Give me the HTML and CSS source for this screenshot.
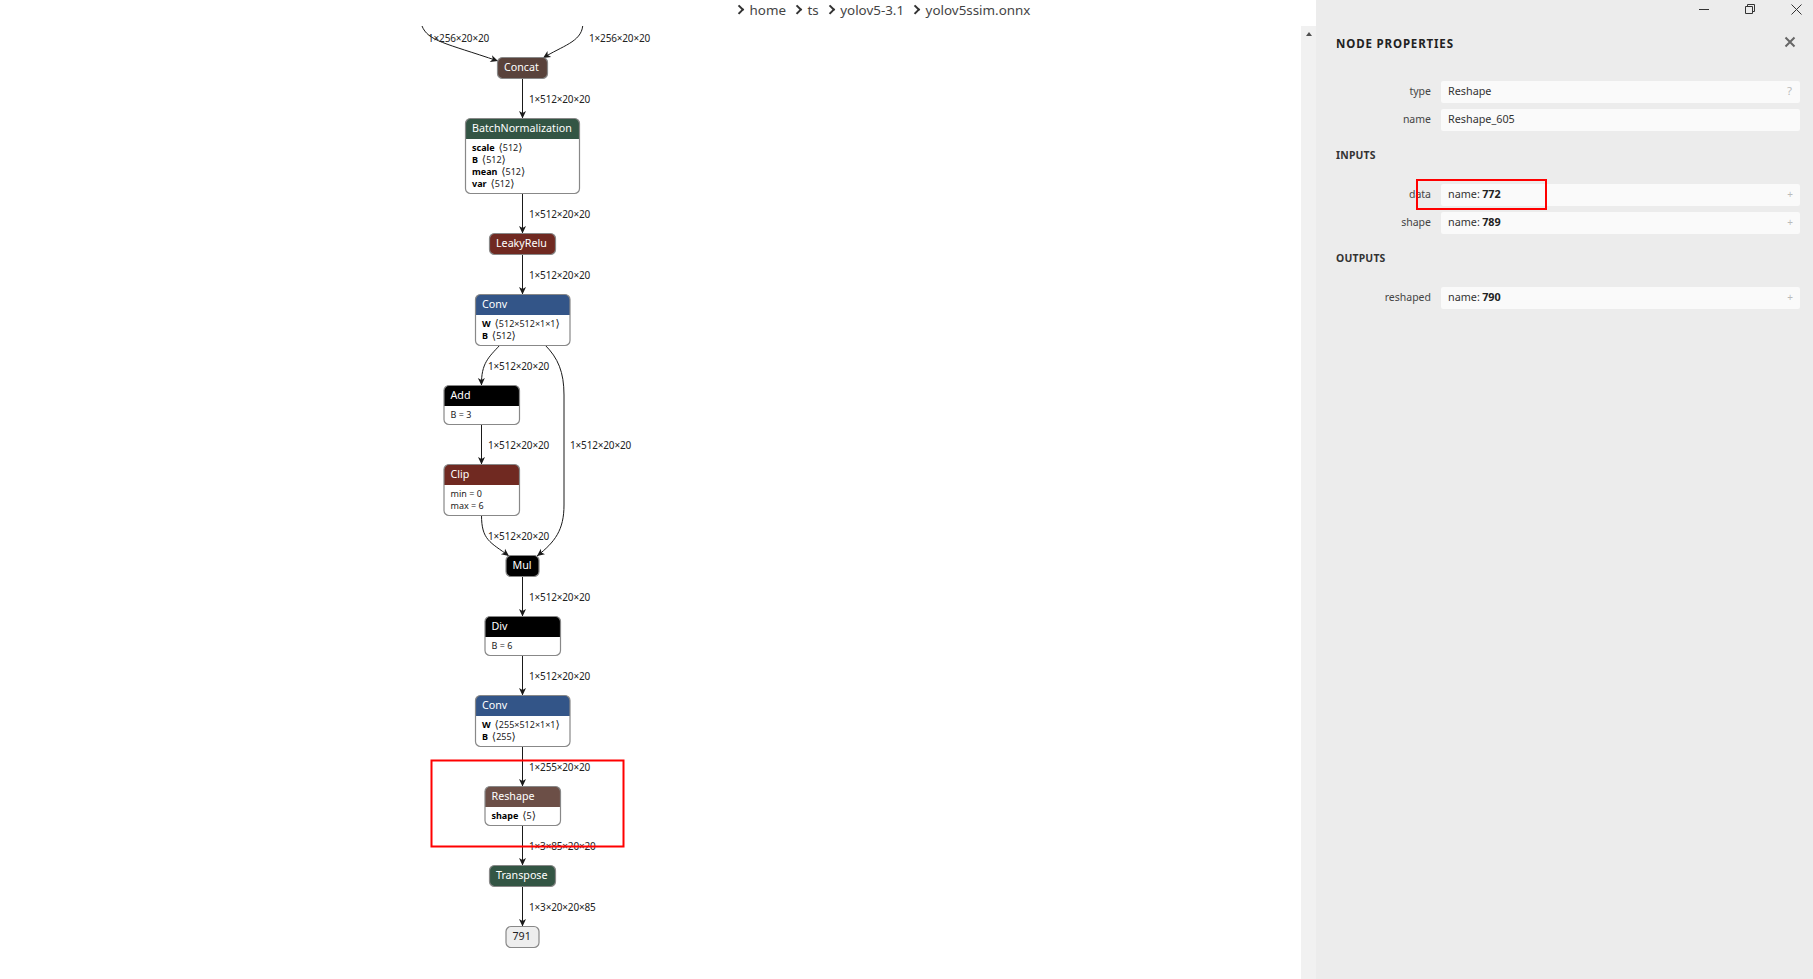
FILE: index.html
```html
<!DOCTYPE html>
<html lang="en">
<head>
<meta charset="utf-8">
<title>yolov5ssim.onnx</title>
<link rel="stylesheet" href="styles.css">
</head>
<body>
<div class="app">
  <main class="canvas">
    <svg class="graph" width="1301" height="979" viewBox="0 0 1301 979">
      <defs>
        <marker id="arrow" markerUnits="userSpaceOnUse" markerWidth="9" markerHeight="8" refX="8" refY="4" orient="auto">
          <path class="arrow-head" d="M0.5 0.5 L8 4 L0.5 7.5 L2.5 4 Z"/>
        </marker>
      </defs>
      <g class="edges">
        <path marker-end="url(#arrow)" d="M422 26 C428 41 445 43 498 61"/>
        <path marker-end="url(#arrow)" d="M582.7 26 C581 42 562 46 543 58"/>
        <path marker-end="url(#arrow)" d="M522.5 78 V118.5"/>
        <path marker-end="url(#arrow)" d="M522.5 193 V233.5"/>
        <path marker-end="url(#arrow)" d="M522.5 254 V294.5"/>
        <path marker-end="url(#arrow)" d="M500 345 C489 357 481 363 481.5 385.5"/>
        <path marker-end="url(#arrow)" d="M545 345 C558 358 564 372 564 395 L564 505 C564 530 555 542 537 556"/>
        <path marker-end="url(#arrow)" d="M481.5 424 V464.5"/>
        <path marker-end="url(#arrow)" d="M481.5 515 C481.5 540 490 542 509 556"/>
        <path marker-end="url(#arrow)" d="M522.5 576 V616.5"/>
        <path marker-end="url(#arrow)" d="M522.5 655 V695.5"/>
        <path marker-end="url(#arrow)" d="M522.5 746 V786.5"/>
        <path marker-end="url(#arrow)" d="M522.5 825 V865.5"/>
        <path marker-end="url(#arrow)" d="M522.5 886 V926.5"/>
      </g>
      <g class="edge-labels">
        <text x="428" y="42">1×256×20×20</text>
        <text x="589" y="42">1×256×20×20</text>
        <text x="529" y="103">1×512×20×20</text>
        <text x="529" y="218">1×512×20×20</text>
        <text x="529" y="279">1×512×20×20</text>
        <text x="488" y="370">1×512×20×20</text>
        <text x="488" y="449">1×512×20×20</text>
        <text x="570" y="449">1×512×20×20</text>
        <text x="488" y="540">1×512×20×20</text>
        <text x="529" y="601">1×512×20×20</text>
        <text x="529" y="680">1×512×20×20</text>
        <text x="529" y="771">1×255×20×20</text>
        <text x="529" y="850">1×3×85×20×20</text>
        <text x="529" y="911">1×3×20×20×85</text>
      </g>

      <g transform="translate(497.5 57.5)">
        <rect class="solid t-tensor" width="50" height="21" rx="5"/>
        <text class="node-title" x="6.5" y="13.5">Concat</text>
      </g>

      <g transform="translate(465.5 118.5)">
        <rect class="body" width="114" height="75" rx="5"/>
        <path class="t-norm" d="M0 20.5 V5 A5 5 0 0 1 5 0 H109 A5 5 0 0 1 114 5 V20.5 Z"/>
        <rect class="frame" width="114" height="75" rx="5"/>
        <text class="node-title" x="6.5" y="13.5">BatchNormalization</text>
        <text class="attr" x="6.5" y="32.5"><tspan class="attr-name">scale</tspan> <tspan class="br" dx="1.5">⟨</tspan>512<tspan class="br">⟩</tspan></text>
        <text class="attr" x="6.5" y="44.5"><tspan class="attr-name">B</tspan> <tspan class="br" dx="1.5">⟨</tspan>512<tspan class="br">⟩</tspan></text>
        <text class="attr" x="6.5" y="56.5"><tspan class="attr-name">mean</tspan> <tspan class="br" dx="1.5">⟨</tspan>512<tspan class="br">⟩</tspan></text>
        <text class="attr" x="6.5" y="68.5"><tspan class="attr-name">var</tspan> <tspan class="br" dx="1.5">⟨</tspan>512<tspan class="br">⟩</tspan></text>
      </g>

      <g transform="translate(489.5 233.5)">
        <rect class="solid t-act" width="66" height="21" rx="5"/>
        <text class="node-title" x="6.5" y="13.5">LeakyRelu</text>
      </g>

      <g transform="translate(475.5 294.5)">
        <rect class="body" width="94.5" height="51" rx="5"/>
        <path class="t-conv" d="M0 20.5 V5 A5 5 0 0 1 5 0 H89.5 A5 5 0 0 1 94.5 5 V20.5 Z"/>
        <rect class="frame" width="94.5" height="51" rx="5"/>
        <text class="node-title" x="6.5" y="13.5">Conv</text>
        <text class="attr" x="6.5" y="32.5"><tspan class="attr-name">W</tspan> <tspan class="br" dx="1.5">⟨</tspan>512×512×1×1<tspan class="br">⟩</tspan></text>
        <text class="attr" x="6.5" y="44.5"><tspan class="attr-name">B</tspan> <tspan class="br" dx="1.5">⟨</tspan>512<tspan class="br">⟩</tspan></text>
      </g>

      <g transform="translate(444 385.5)">
        <rect class="body" width="75.5" height="39" rx="5"/>
        <path class="t-black" d="M0 20.5 V5 A5 5 0 0 1 5 0 H70.5 A5 5 0 0 1 75.5 5 V20.5 Z"/>
        <rect class="frame" width="75.5" height="39" rx="5"/>
        <text class="node-title" x="6.5" y="13.5">Add</text>
        <text class="attr" x="6.5" y="32.5">B = 3</text>
      </g>

      <g transform="translate(444 464.5)">
        <rect class="body" width="75.5" height="51" rx="5"/>
        <path class="t-act" d="M0 20.5 V5 A5 5 0 0 1 5 0 H70.5 A5 5 0 0 1 75.5 5 V20.5 Z"/>
        <rect class="frame" width="75.5" height="51" rx="5"/>
        <text class="node-title" x="6.5" y="13.5">Clip</text>
        <text class="attr" x="6.5" y="32.5">min = 0</text>
        <text class="attr" x="6.5" y="44.5">max = 6</text>
      </g>

      <g transform="translate(506 555.5)">
        <rect class="solid t-black" width="33" height="21" rx="5"/>
        <text class="node-title" x="6.5" y="13.5">Mul</text>
      </g>

      <g transform="translate(485 616.5)">
        <rect class="body" width="75.5" height="39" rx="5"/>
        <path class="t-black" d="M0 20.5 V5 A5 5 0 0 1 5 0 H70.5 A5 5 0 0 1 75.5 5 V20.5 Z"/>
        <rect class="frame" width="75.5" height="39" rx="5"/>
        <text class="node-title" x="6.5" y="13.5">Div</text>
        <text class="attr" x="6.5" y="32.5">B = 6</text>
      </g>

      <g transform="translate(475.5 695.5)">
        <rect class="body" width="94.5" height="51" rx="5"/>
        <path class="t-conv" d="M0 20.5 V5 A5 5 0 0 1 5 0 H89.5 A5 5 0 0 1 94.5 5 V20.5 Z"/>
        <rect class="frame" width="94.5" height="51" rx="5"/>
        <text class="node-title" x="6.5" y="13.5">Conv</text>
        <text class="attr" x="6.5" y="32.5"><tspan class="attr-name">W</tspan> <tspan class="br" dx="1.5">⟨</tspan>255×512×1×1<tspan class="br">⟩</tspan></text>
        <text class="attr" x="6.5" y="44.5"><tspan class="attr-name">B</tspan> <tspan class="br" dx="1.5">⟨</tspan>255<tspan class="br">⟩</tspan></text>
      </g>

      <g transform="translate(485 786.5)">
        <rect class="body" width="75.5" height="39" rx="5"/>
        <path class="t-shape" d="M0 20.5 V5 A5 5 0 0 1 5 0 H70.5 A5 5 0 0 1 75.5 5 V20.5 Z"/>
        <rect class="frame" width="75.5" height="39" rx="5"/>
        <text class="node-title" x="6.5" y="13.5">Reshape</text>
        <text class="attr" x="6.5" y="32.5"><tspan class="attr-name">shape</tspan> <tspan class="br" dx="1.5">⟨</tspan>5<tspan class="br">⟩</tspan></text>
      </g>

      <g transform="translate(489.5 865.5)">
        <rect class="solid t-norm" width="66" height="21" rx="5"/>
        <text class="node-title" x="6.5" y="13.5">Transpose</text>
      </g>

      <g transform="translate(506 926.5)">
        <rect class="solid t-output" width="33" height="21" rx="5"/>
        <text class="node-title output-title" x="6.5" y="13.5">791</text>
      </g>

      <rect class="mark" x="431.5" y="760.5" width="192" height="86"/>
    </svg>

    <nav class="crumbs">
      <span class="crumb">home</span>
      <span class="crumb">ts</span>
      <span class="crumb">yolov5-3.1</span>
      <span class="crumb">yolov5ssim.onnx</span>
    </nav>
  </main>

  <div class="scrollbar"><span class="scroll-up"></span></div>

  <aside class="sidebar">
    <header class="side-head">
      <h1 class="side-title">NODE PROPERTIES</h1>
      <svg class="side-close" width="12" height="12" viewBox="0 0 12 12"><path d="M1.5 1.5 L10.5 10.5 M10.5 1.5 L1.5 10.5"/></svg>
    </header>

    <section class="rows">
      <div class="row"><span class="row-label">type</span><div class="row-value">Reshape<span class="row-icon row-icon-help">?</span></div></div>
      <div class="row"><span class="row-label">name</span><div class="row-value">Reshape_605</div></div>
    </section>

    <h2 class="section-title">INPUTS</h2>
    <section class="rows">
      <div class="row"><span class="row-label">data</span><div class="row-value">name: <b>772</b><span class="row-icon">+</span></div></div>
      <div class="row"><span class="row-label">shape</span><div class="row-value">name: <b>789</b><span class="row-icon">+</span></div></div>
    </section>

    <h2 class="section-title">OUTPUTS</h2>
    <section class="rows">
      <div class="row"><span class="row-label">reshaped</span><div class="row-value">name: <b>790</b><span class="row-icon">+</span></div></div>
    </section>

    <div class="side-mark"></div>
  </aside>

  <div class="window-controls">
    <svg width="10" height="10" viewBox="0 0 10 10"><path d="M0 5.5 H10"/></svg>
    <svg width="10" height="10" viewBox="0 0 10 10"><path d="M0.5 2.5 H7.5 V9.5 H0.5 Z M2.5 2.5 V0.5 H9.5 V7.5 H7.5"/></svg>
    <svg width="11" height="11" viewBox="0 0 11 11"><path d="M0.5 0.5 L10.5 10.5 M10.5 0.5 L0.5 10.5"/></svg>
  </div>
</div>
</body>
</html>
```

FILE: styles.css
```css
* { box-sizing: border-box; }

html, body {
  margin: 0;
  height: 100%;
  overflow: hidden;
  background: #fff;
  font-family: "Noto Sans", "DejaVu Sans", sans-serif;
}

.app {
  position: relative;
  display: flex;
  height: 979px;
  overflow: hidden;
}

/* graph canvas */
.canvas {
  position: relative;
  flex: 0 0 1301px;
  background: #fff;
}

.graph { display: block; }

.graph text { font-family: "Noto Sans", "DejaVu Sans", sans-serif; }

.edges path {
  fill: none;
  stroke: #1a1a1a;
  stroke-width: 1;
}

.arrow-head { fill: #1a1a1a; stroke: none; }

.edge-labels text {
  font-size: 10px;
  letter-spacing: -0.17px;
  fill: #222;
}

.body { fill: #fff; }

.frame {
  fill: none;
  stroke: #888;
  stroke-width: 1.2;
}

.solid { stroke: #888; stroke-width: 1.2; }

.t-tensor { fill: #59423b; }
.t-norm { fill: #335544; }
.t-act { fill: #702921; }
.t-conv { fill: #335588; }
.t-black { fill: #000; }
.t-shape { fill: #6c4f47; }
.t-output { fill: #eee; }

.node-title {
  font-size: 10.7px;
  fill: #fff;
}

.output-title { fill: #222; }

.attr {
  font-size: 9px;
  fill: #222;
}

.attr-name {
  font-weight: 700;
  fill: #000;
}

.br {
  font-family: "DejaVu Sans", sans-serif;
  font-size: 11px;
  font-weight: 400;
}

.mark {
  fill: none;
  stroke: #f00;
  stroke-width: 2;
}

/* breadcrumb over the canvas */
.crumbs {
  position: absolute;
  top: 0;
  left: 737px;
  display: flex;
  height: 19px;
  align-items: center;
  gap: 9px;
  font-size: 13.4px;
  color: #444;
}

.crumb::before {
  content: "";
  display: inline-block;
  width: 4.5px;
  height: 4.5px;
  margin: 0 7px 2px -1px;
  border-top: 2px solid #333;
  border-right: 2px solid #333;
  transform: rotate(45deg);
}

/* scrollbar */
.scrollbar {
  flex: 0 0 15px;
  margin-top: 26px;
  background: #f1f1f1;
  display: flex;
  justify-content: center;
  padding-top: 6px;
}

.scroll-up {
  width: 0;
  height: 0;
  border-left: 3.5px solid transparent;
  border-right: 3.5px solid transparent;
  border-bottom: 4px solid #505050;
}

/* sidebar */
.sidebar {
  position: relative;
  flex: 1;
  padding: 33px 13px 0 20px;
  background: #ececec;
  color: #333;
}

.side-head {
  display: flex;
  align-items: center;
  justify-content: space-between;
  height: 22px;
  margin-bottom: 26px;
}

.side-title {
  margin: -1px 0 0;
  font-size: 11.5px;
  font-weight: 700;
  letter-spacing: 0.85px;
  color: #222;
}

.side-close {
  margin: -5px 4px 0 0;
}

.side-close path {
  fill: none;
  stroke: #666;
  stroke-width: 2;
}

.rows {
  display: flex;
  flex-direction: column;
  gap: 6px;
}

.row {
  display: flex;
  height: 22px;
  align-items: center;
}

.row-label {
  flex: 0 0 95px;
  padding-bottom: 3px;
  text-align: right;
  font-size: 10.5px;
  color: #444;
}

.row-value {
  position: relative;
  display: flex;
  align-items: center;
  flex: 1;
  height: 22px;
  margin-left: 10px;
  padding: 0 0 3px 7px;
  border-radius: 2px;
  background: #fafafa;
  font-size: 10.8px;
  word-spacing: -0.5px;
  color: #333;
  white-space: pre;
}

.row-value b { color: #222; }

.row-icon {
  margin-left: auto;
  padding-right: 7px;
  font-size: 10px;
  color: #bbb;
}

.row-icon-help {
  padding-right: 8px;
  font-size: 11.5px;
}

.section-title {
  margin: 16px 0 21px;
  font-size: 10.4px;
  line-height: 16px;
  font-weight: 700;
  letter-spacing: 0.2px;
  color: #333;
}

/* annotation lying over the first input row */
.side-mark {
  position: absolute;
  left: 100px;
  top: 179px;
  width: 131px;
  height: 31px;
  border: 2px solid #f00;
}

/* title-bar buttons over the sidebar */
.window-controls {
  position: absolute;
  top: 4px;
  right: 11.5px;
  display: flex;
  gap: 36px;
  align-items: flex-start;
}

.window-controls path {
  fill: none;
  stroke: #333;
  stroke-width: 1;
}
```
